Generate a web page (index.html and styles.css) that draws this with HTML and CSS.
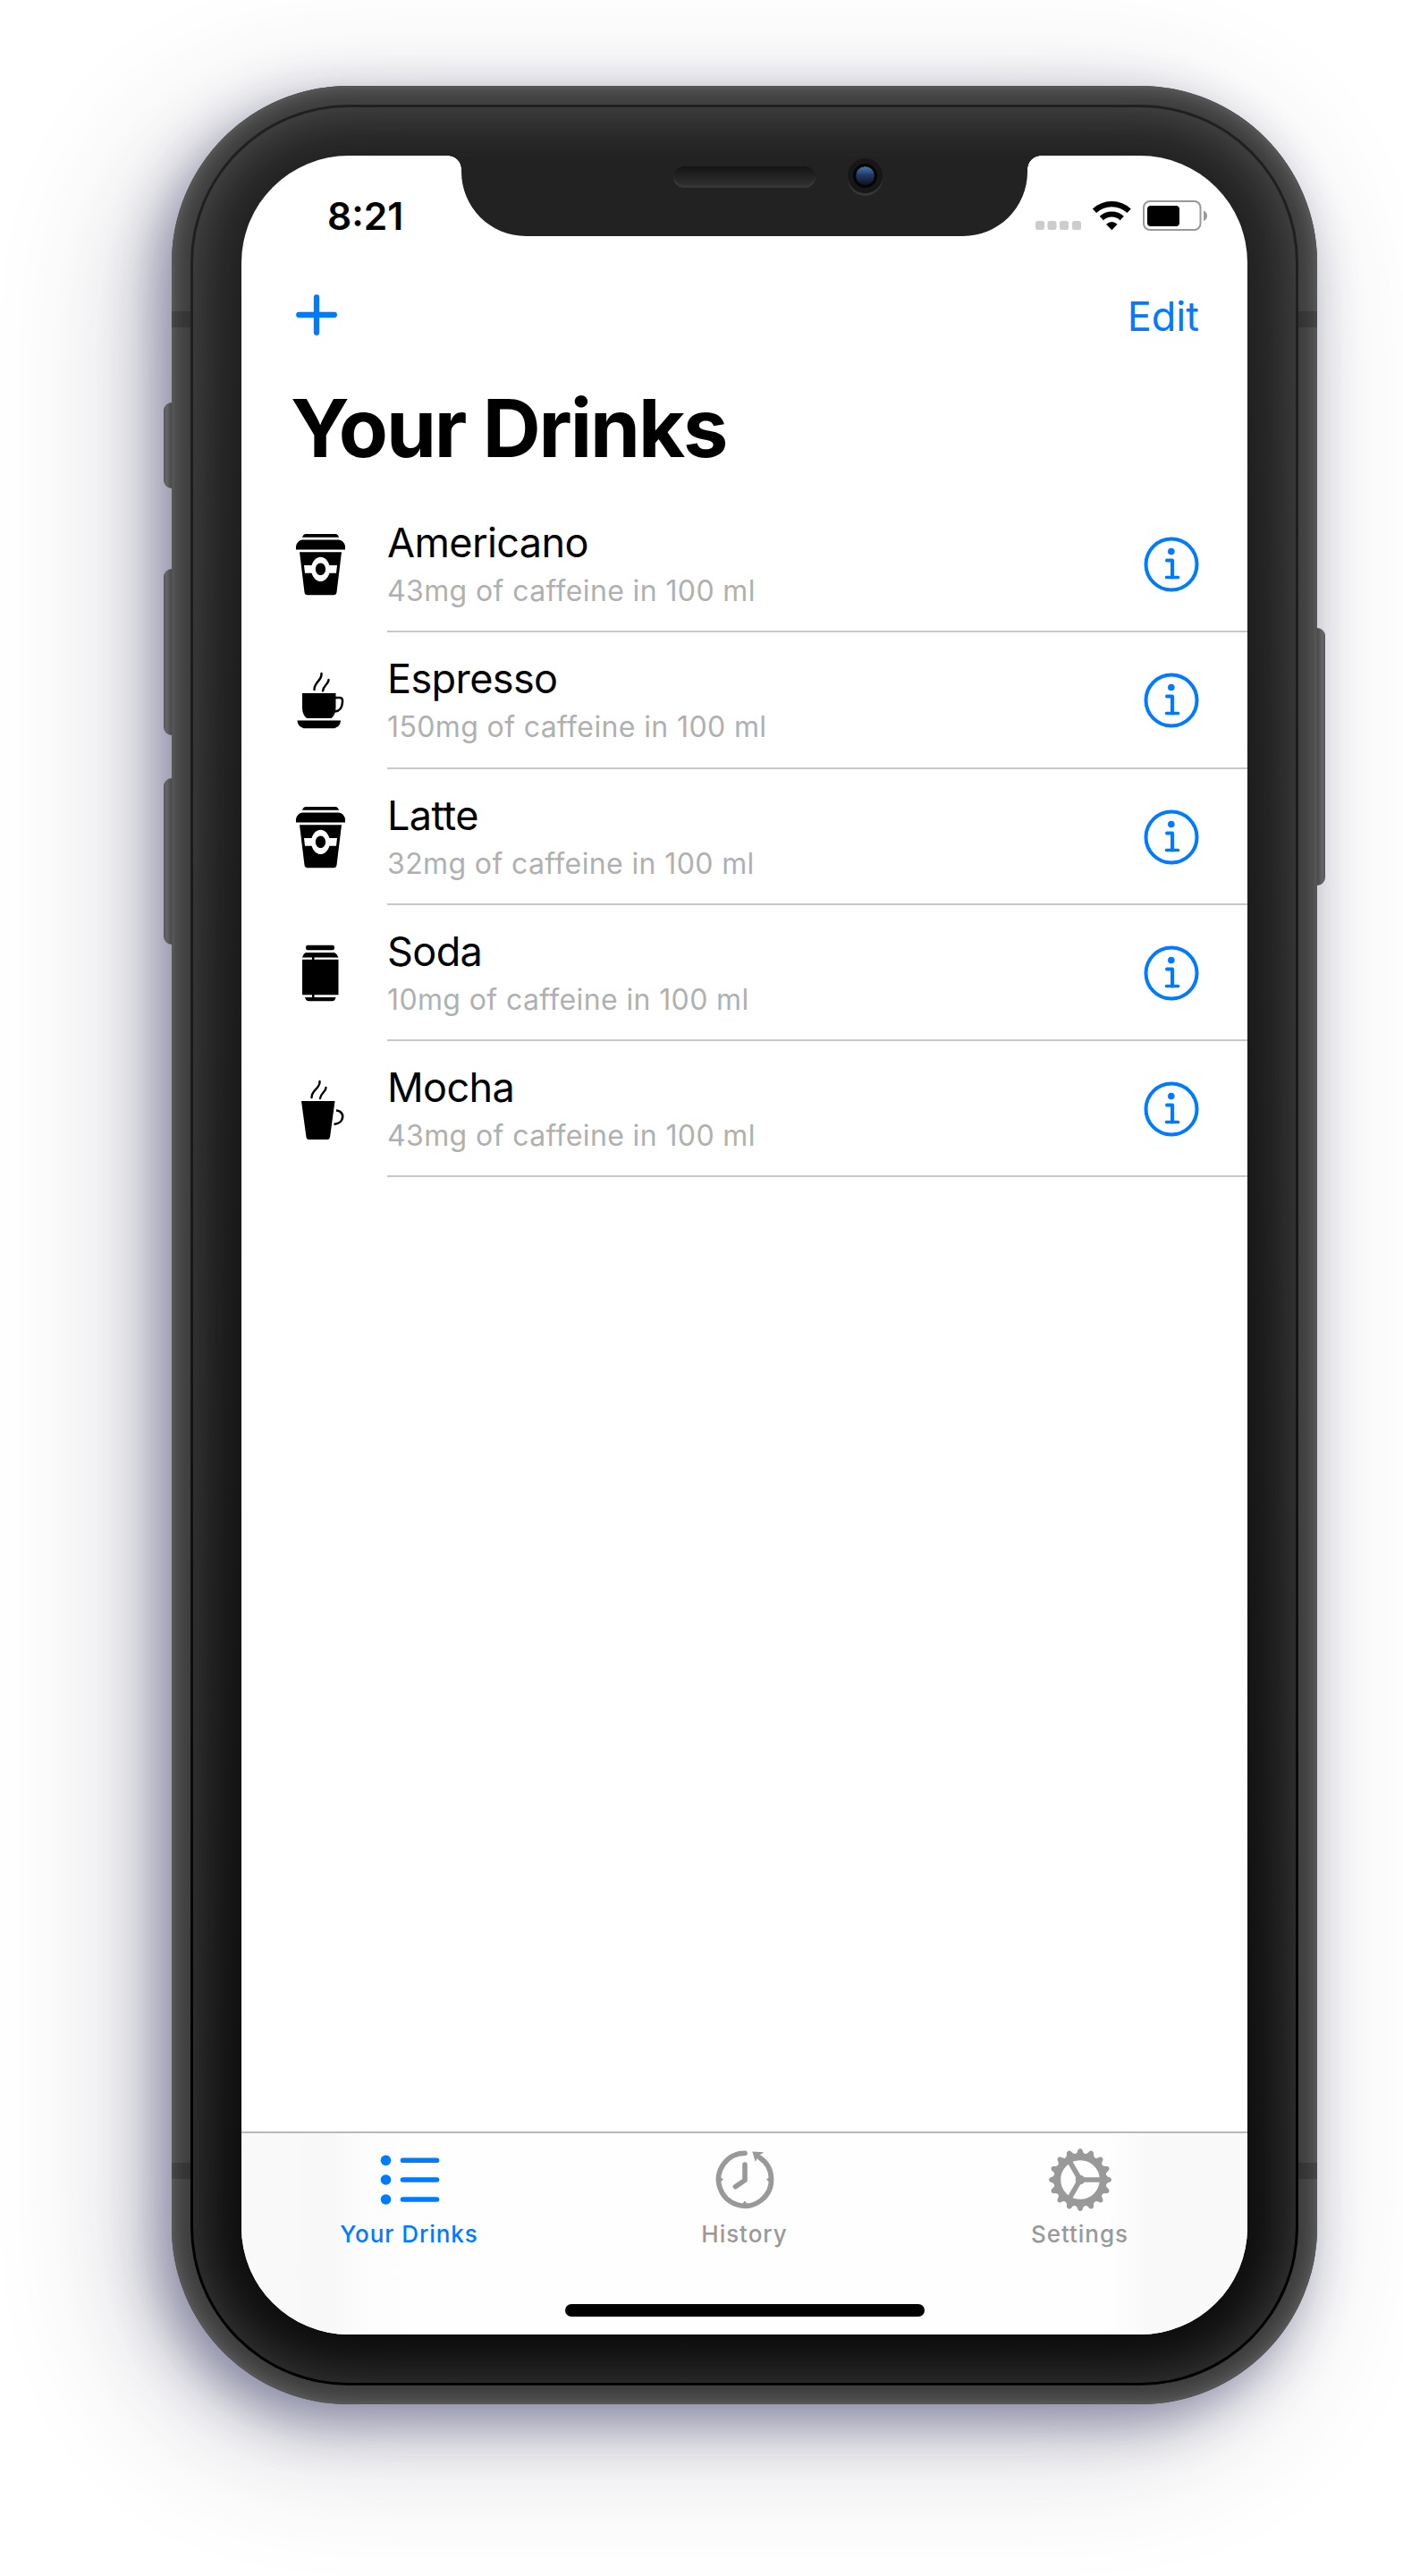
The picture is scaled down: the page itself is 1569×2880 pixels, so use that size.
FILE: index.html
```html
<!DOCTYPE html>
<html lang="en">
<head>
<meta charset="utf-8">
<title>Your Drinks</title>
<link rel="stylesheet" href="styles.css">
</head>
<body>
<svg class="defs" aria-hidden="true">
  <symbol id="info" viewBox="0 0 64 64">
    <circle cx="32" cy="32" r="28.5" fill="none" stroke="currentColor" stroke-width="4"/>
    <circle cx="31.8" cy="17.5" r="3.8" fill="currentColor"/>
    <path d="M27 27.5h6v19" fill="none" stroke="currentColor" stroke-width="4" stroke-linecap="round" stroke-linejoin="round"/>
    <path d="M26.500 46.500h13" stroke="currentColor" stroke-width="3.600" stroke-linecap="round"/>
  </symbol>
  <symbol id="takeaway" viewBox="0 0 64 84">
    <path d="M15 8h33q3 0 4 3.800h-41q1-3.800 4-3.800z"/>
    <path d="M11 14.500h41q5.500 1 7 7v4h-55v-4q1.500-6 7-7z"/>
    <path fill-rule="evenodd" d="M8 28.300h47l-5.500 45q-.5 3-3.500 3h-29q-3 0-3.500-3zM13 43l1 8.700h7.600c1.600 5.500 5.400 9.300 9.900 9.300s8.300-3.800 9.900-9.300h7.600l1-8.700h-8.600c-1.600-5.500-5.400-9.300-9.900-9.300s-8.300 3.800-9.900 9.300zM31.500 40.500c3.200 0 5.600 3 5.600 6.800s-2.400 6.800-5.600 6.800-5.600-3-5.600-6.800 2.400-6.800 5.600-6.800z"/>
  </symbol>
  <symbol id="cup" viewBox="0 0 64 84">
    <path d="M32.500 12c1 8-8 9-8 18M40.500 19c0 5-6 6-6.500 12.500" fill="none" stroke="#000" stroke-width="2.400" stroke-linecap="round"/>
    <path d="M11 34h37.500v16q0 8-5 12h-27.500q-5-4-5-12z"/>
    <path d="M48 39h5q3.500 0 3 5-.7 10-8.500 10.500" fill="none" stroke="#000" stroke-width="2.500"/>
    <path d="M5.500 64.500h48.500q0 6.500-7 8.700h-34.500q-7-2.200-7-8.700z"/>
  </symbol>
  <symbol id="can" viewBox="0 0 64 84">
    <rect x="15" y="10.700" width="32" height="5.500" rx="2.200"/>
    <path d="M15 19h32q2.500 1 4.500 5.400h-40.500q1.500-4.400 4-5.400zM11 26.800h40.500v39.400h-40.500zM14 69h34.500q-.7 4.200-4 4.200h-26q-3.500 0-4.500-4.200zM22 24h2.500v3h-2.500zM22 66h2.500v3.500h-2.500z"/>
  </symbol>
  <symbol id="mug" viewBox="0 0 64 84">
    <path d="M30.500 11c1 8-9 9-9 18M37.500 18c0 5-6 6-6.500 12" fill="none" stroke="#000" stroke-width="2.400" stroke-linecap="round"/>
    <path d="M10 33h37.500l-5.500 40.500q-.5 2.500-3 2.500h-20.500q-2.500 0-3-2.500z"/>
    <path d="M49 43.500c10 0 10 14.500-2.500 15.500" fill="none" stroke="#000" stroke-width="2.600"/>
  </symbol>
  <g id="teeth">
    <path id="tooth" d="M33.500 12Q37 10 37.500 6.500Q40 3.500 42.500 6.500Q43 10 46.500 12z"/>
    <use href="#tooth" transform="rotate(22.5 40 40)"/>
    <use href="#tooth" transform="rotate(45 40 40)"/>
    <use href="#tooth" transform="rotate(67.5 40 40)"/>
  </g>
</svg>
<main class="device">
  <i class="side-button silent"></i>
  <i class="side-button volume-up"></i>
  <i class="side-button volume-down"></i>
  <i class="side-button power"></i>
  <i class="antenna antenna-top"></i>
  <i class="antenna antenna-bottom"></i>
  <div class="bezel">
    <div class="screen">
      <header class="status">
        <span class="clock">8:21</span>
        <svg class="status-icons" width="200" height="44" viewBox="0 0 200 44">
          <g fill="#ccc"><rect x="6" y="27" width="10" height="10" rx="2.500"/><rect x="19.500" y="27" width="10" height="10" rx="2.500"/><rect x="33" y="27" width="10" height="10" rx="2.500"/><rect x="47" y="27" width="10" height="10" rx="2.500"/></g>
          <g fill="none" stroke="#000" stroke-width="6.200"><path d="M72 15.800a28 28 0 0 1 38.600 0"/><path d="M79.800 24a17 17 0 0 1 23 0"/></g>
          <path d="M91.300 37.200l-6.300-6.500q6.300-5.300 12.600 0z"/>
          <rect x="127" y="5" width="63.500" height="32" rx="7" fill="none" stroke="#999" stroke-width="2"/>
          <rect x="131" y="10" width="36" height="23" rx="4"/>
          <path d="M194 15.500c5.300 2 5.300 9.500 0 11.500z" fill="#999"/>
        </svg>
      </header>
      <nav class="actions">
        <svg width="46" height="46" viewBox="0 0 46 46"><path d="M23 3.300v39.500M3.300 23h39.500" stroke="currentColor" stroke-width="6.300" stroke-linecap="round"/></svg>
        <span class="edit">Edit</span>
      </nav>
      <h1>Your Drinks</h1>
      <ul class="drinks">
        <li><svg class="drink-icon"><use href="#takeaway"/></svg><div class="drink"><div><h2>Americano</h2><p>43mg of caffeine in 100 ml</p></div><svg class="info"><use href="#info"/></svg></div></li>
        <li><svg class="drink-icon"><use href="#cup"/></svg><div class="drink"><div><h2>Espresso</h2><p>150mg of caffeine in 100 ml</p></div><svg class="info"><use href="#info"/></svg></div></li>
        <li><svg class="drink-icon"><use href="#takeaway"/></svg><div class="drink"><div><h2>Latte</h2><p>32mg of caffeine in 100 ml</p></div><svg class="info"><use href="#info"/></svg></div></li>
        <li><svg class="drink-icon"><use href="#can"/></svg><div class="drink"><div><h2>Soda</h2><p>10mg of caffeine in 100 ml</p></div><svg class="info"><use href="#info"/></svg></div></li>
        <li><svg class="drink-icon"><use href="#mug"/></svg><div class="drink"><div><h2>Mocha</h2><p>43mg of caffeine in 100 ml</p></div><svg class="info"><use href="#info"/></svg></div></li>
      </ul>
      <footer class="tabs">
        <div class="tab active">
          <svg width="80" height="80" viewBox="0 0 80 80"><g fill="currentColor"><circle cx="13.500" cy="18.300" r="5.800"/><circle cx="13.500" cy="40" r="5.800"/><circle cx="13.500" cy="62" r="5.800"/></g><path d="M32.500 18.300h38M32.500 40h38M32.500 62h38" stroke="currentColor" stroke-width="5.600" stroke-linecap="round"/></svg>
          <span>Your Drinks</span>
        </div>
        <div class="tab">
          <svg width="80" height="80" viewBox="0 0 80 80"><g fill="none" stroke="currentColor" stroke-width="5.600" stroke-linecap="round"><path d="M40 10.200a29.500 29.500 0 1 0 16.500 5"/><path d="M40 23v17.500l-10.600 7.200" stroke-linejoin="round"/></g><path d="M48.300 8.500l13 .8-6 3.700-3.500 7zM12 36.500l4 3.200-4 3.200zM68 36.500l-4 3.200 4 3.200zM36.800 67.500l3.200-4 3.200 4z" fill="currentColor"/></svg>
          <span>History</span>
        </div>
        <div class="tab">
          <svg width="80" height="80" viewBox="0 0 80 80"><circle cx="40" cy="40" r="25.700" fill="none" stroke="currentColor" stroke-width="7.800"/><g fill="currentColor"><use href="#teeth"/><use href="#teeth" transform="rotate(90 40 40)"/><use href="#teeth" transform="rotate(180 40 40)"/><use href="#teeth" transform="rotate(270 40 40)"/></g><path d="M40 40h25M40 40l-12.500-21.700M40 40l-12.500 21.700" stroke="currentColor" stroke-width="5.600"/><circle cx="40" cy="40" r="5.300" fill="currentColor"/></svg>
          <span>Settings</span>
        </div>
        <i class="home"></i>
      </footer>
    </div>
    <div class="notch"><i class="speaker"></i><i class="camera"></i></div>
  </div>
</main>
</body>
</html>
```
FILE: styles.css
```css
* { box-sizing: border-box; margin: 0; padding: 0; }
body {
  width: 1569px;
  height: 2880px;
  padding: 96px 0 0 192px;
  background: #fff;
  overflow: hidden;
  font-family: Inter, "Liberation Sans", sans-serif;
  color: #000;
}
.defs { position: absolute; width: 0; height: 0; }
.device {
  position: relative;
  width: 1281px;
  height: 2592px;
  padding: 21px;
  border-radius: 198px;
  background: #3c3c3c;
  box-shadow:
    inset 0 0 0 3px #555,
    inset 0 0 24px 3px #666,
    -15px 20px 56px rgba(50, 50, 98, .48),
    -36px 36px 150px rgba(50, 50, 80, .26);
}
.bezel {
  position: relative;
  height: 2550px;
  padding: 54px;
  border: 3px solid transparent;
  border-radius: 177px;
  background:
    linear-gradient(#222, #0c0c0c) padding-box,
    linear-gradient(#202020, #181818 50%, #000 90%) border-box;
  box-shadow: inset 0 0 66px rgba(255, 255, 255, .24);
}
.side-button {
  position: absolute;
  left: -9px;
  width: 9px;
  border-radius: 9px 0 0 9px;
  background: linear-gradient(90deg, #555, #666 35%, #48484c);
}
.silent { top: 354px; height: 96px; }
.volume-up { top: 540px; height: 186px; }
.volume-down { top: 774px; height: 186px; }
.power { top: 606px; left: auto; right: -9px; height: 288px; transform: scaleX(-1); }
.antenna { position: absolute; left: 0; width: 100%; height: 18px; background: rgba(0, 0, 0, .18); }
.antenna-top { top: 252px; }
.antenna-bottom { bottom: 252px; }
.screen {
  display: flex;
  flex-direction: column;
  height: 2436px;
  border-radius: 120px;
  background: #fff;
  overflow: hidden;
}
.notch {
  position: absolute;
  top: 54px;
  left: 300px;
  width: 633px;
  height: 90px;
  border-radius: 0 0 72px 72px;
  background: #222;
}
.notch::before, .notch::after {
  content: "";
  position: absolute;
  top: 0;
  left: -15px;
  width: 15px;
  height: 15px;
  background: radial-gradient(circle at 0 100%, transparent 14.500px, #222 15px);
}
.notch::after { left: auto; right: -15px; transform: scaleX(-1); }
.speaker {
  position: absolute;
  left: 237px;
  top: 12px;
  width: 159px;
  height: 24px;
  border-radius: 12px;
  background: linear-gradient(#141414, #333);
  box-shadow: inset 0 -3px 0 #363636;
}
.camera {
  position: absolute;
  left: 432px;
  top: 3px;
  width: 39px;
  height: 39px;
  border-radius: 50%;
  border: 9px solid #171717;
  background: linear-gradient(#447bb5, #233a66 45%, #0b1226) padding-box;
  box-shadow: 0 3px 0 #363636;
}
.camera::after {
  content: "";
  position: absolute;
  inset: -3px;
  border: 3px solid #050505;
  border-radius: 50%;
}
.status {
  display: flex;
  justify-content: space-between;
  height: 152px;
  padding: 43px 43px 0 96px;
}
.clock { font-size: 42.500px; line-height: 50px; font-weight: 600; }
.status-icons { margin-top: 3px; }
.actions {
  display: flex;
  justify-content: space-between;
  height: 99px;
  padding: 0 54px 0 61px;
  color: #007aff;
}
.actions svg { margin-top: 3px; }
.edit { margin-top: 1px; font-size: 45px; line-height: 54px; }
h1 { height: 130px; padding-left: 55px; font-size: 90px; line-height: 108px; font-weight: 700; letter-spacing: -2.100px; }
.drinks { list-style: none; flex: 1; }
.drinks li { display: flex; height: 152.300px; padding-left: 57px; }
.drink-icon { width: 64px; height: 84px; margin: 34px 42px 0 0; }
.drink {
  display: flex;
  flex: 1;
  justify-content: space-between;
  padding: 25px 53px 0 0;
  border-bottom: 2px solid #c8c8c8;
}
h2 { font-size: 45px; line-height: 54px; font-weight: 400; letter-spacing: -.600px; }
p { margin-top: 7px; font-size: 32px; line-height: 40px; color: #b0b0b0; letter-spacing: .380px; }
.info { width: 64px; height: 64px; margin-top: 19px; color: #007aff; }
.tabs {
  position: relative;
  display: flex;
  justify-content: space-between;
  height: 227px;
  border-top: 2px solid #b9b9b9;
  background: linear-gradient(90deg, #f9f9f9, #f8f8f8 9%, #fdfdfd 13%, #fefefe 20%, #fefefe 86%, #f9f9f9 90%);
}
.tab {
  display: flex;
  flex-direction: column;
  align-items: center;
  width: 375px;
  padding-top: 12px;
  color: #999;
}
.tab span { margin-top: 5px; font-size: 26px; line-height: 32px; font-weight: 500; letter-spacing: .950px; }
.tab.active { color: #007aff; }
.home {
  position: absolute;
  left: 362px;
  bottom: 20px;
  width: 402px;
  height: 14px;
  border-radius: 7px;
  background: #000;
}
```
